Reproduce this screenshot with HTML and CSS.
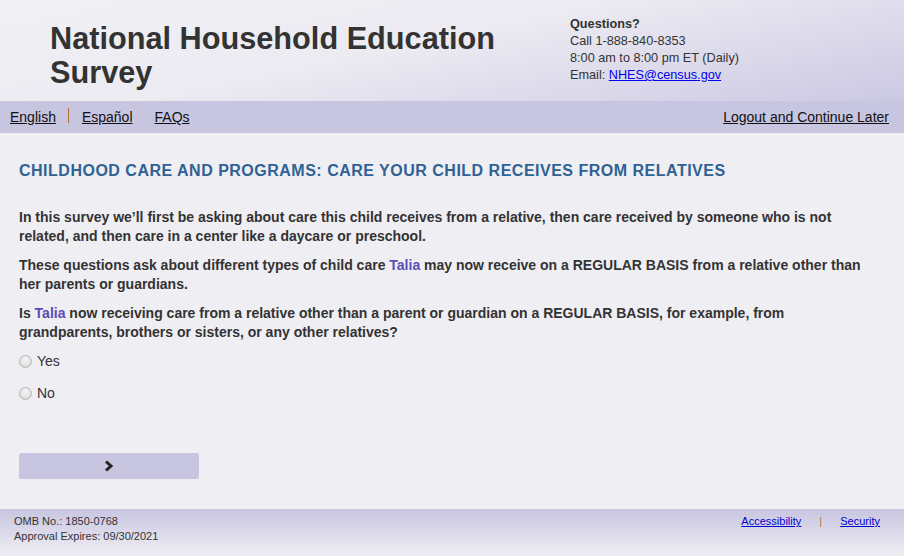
FILE: index.html
```html
<!DOCTYPE html>
<html lang="en">
<head>
    <meta charset="UTF-8">
    <meta name="viewport" content="width=device-width, initial-scale=1.0">
    <title>National Household Education Survey</title>
    <link rel="stylesheet" href="styles.css">
</head>
<body>
    <header class="site-header">
        <h1 class="site-title">National Household Education Survey</h1>
        <div class="contact">
            <div class="contact-title">Questions?</div>
            <div>Call 1-888-840-8353</div>
            <div>8:00 am to 8:00 pm ET (Daily)</div>
            <div>Email: <a href="#" class="contact-mail">NHES@census.gov</a></div>
        </div>
    </header>

    <nav class="nav-bar">
        <div class="nav-left">
            <a href="#" class="nav-link">English</a>
            <span class="nav-sep"></span>
            <a href="#" class="nav-link">Español</a>
            <a href="#" class="nav-link nav-faq">FAQs</a>
        </div>
        <a href="#" class="nav-link">Logout and Continue Later</a>
    </nav>

    <main class="survey">
        <h2 class="survey-heading">CHILDHOOD CARE AND PROGRAMS: CARE YOUR CHILD RECEIVES FROM RELATIVES</h2>
        <p class="survey-text">In this survey we’ll first be asking about care this child receives from a relative, then care received by someone who is not related, and then care in a center like a daycare or preschool.</p>
        <p class="survey-text">These questions ask about different types of child care <span class="child-name">Talia</span> may now receive on a REGULAR BASIS from a relative other than her parents or guardians.</p>
        <p class="survey-text">Is <span class="child-name">Talia</span> now receiving care from a relative other than a parent or guardian on a REGULAR BASIS, for example, from grandparents, brothers or sisters, or any other relatives?</p>

        <div class="answers">
            <label class="answer"><input type="radio" name="relcare"> Yes</label>
            <label class="answer"><input type="radio" name="relcare"> No</label>
        </div>

        <button class="next-btn" type="button">
            <svg width="12" height="12" viewBox="0 0 12 12"><path d="M3 1.5 L8 6 L3 10.5" fill="none" stroke="#222" stroke-width="3"/></svg>
        </button>
    </main>

    <footer class="site-footer">
        <div class="omb">
            <div>OMB No.: 1850-0768</div>
            <div>Approval Expires: 09/30/2021</div>
        </div>
        <div class="footer-links">
            <a href="#">Accessibility</a>
            <span class="footer-sep">|</span>
            <a href="#">Security</a>
        </div>
    </footer>
</body>
</html>
```

FILE: styles.css
```css
* {
    box-sizing: border-box;
    margin: 0;
    padding: 0;
}

body {
    font-family: "Liberation Sans", Arial, sans-serif;
    background: #efeef3;
    color: #333;
    width: 904px;
    height: 556px;
    display: flex;
    flex-direction: column;
}

/* Header */
.site-header {
    height: 101px;
    display: flex;
    padding: 0 0 0 50px;
    background: linear-gradient(168deg, #f0f0f4 0%, #ecebf2 45%, #cbc8e3 100%);
}

.site-title {
    width: 520px;
    padding-top: 22px;
    font-size: 30.7px;
    line-height: 34px;
    font-weight: bold;
    color: #333;
}

.contact {
    padding-top: 16px;
    font-size: 12.7px;
    line-height: 17px;
    color: #333;
}

.contact-title {
    font-weight: bold;
}

.contact-mail {
    color: #0000ee;
}

/* Nav */
.nav-bar {
    height: 32px;
    display: flex;
    align-items: center;
    justify-content: space-between;
    padding: 0 15px 0 10px;
    background: #c8c5e1;
}

.nav-left {
    display: flex;
    align-items: center;
}

.nav-link {
    font-size: 14px;
    color: #111;
}

.nav-sep {
    width: 1px;
    height: 15px;
    margin: 0 13px 0 12px;
    background: #a8723a;
    position: relative;
    top: -2px;
}

.nav-faq {
    margin-left: 22px;
}

/* Survey */
.survey {
    flex: 1;
    padding: 27px 35px 0 19px;
}

.survey-heading {
    font-size: 16px;
    line-height: 22px;
    color: #2f6294;
    letter-spacing: 0.5px;
    margin-bottom: 26px;
}

.survey-text {
    font-size: 14px;
    line-height: 19px;
    font-weight: bold;
    color: #333;
    margin-bottom: 10px;
}

.child-name {
    color: #5a4db3;
}

.answers {
    display: flex;
    flex-direction: column;
    gap: 13px;
    margin-top: 10px;
}

.answer {
    display: flex;
    align-items: center;
    gap: 5px;
    font-size: 14px;
    line-height: 19px;
}

.answer input {
    appearance: none;
    -webkit-appearance: none;
    width: 13px;
    height: 13px;
    margin: 0;
    border: 1px solid #b4b4b4;
    border-radius: 50%;
    background: radial-gradient(circle at 50% 35%, #f6f6f6 0%, #e2e2e2 60%, #d6d6d6 100%);
}

.next-btn {
    display: flex;
    align-items: center;
    justify-content: center;
    width: 180px;
    height: 26px;
    margin-top: 50px;
    border: none;
    border-radius: 2px;
    background: #c8c5e1;
}

/* Footer */
.site-footer {
    height: 47px;
    display: flex;
    justify-content: space-between;
    padding: 5px 24px 0 14px;
    background: linear-gradient(180deg, #c8c5e1 0%, #efeef3 100%);
    font-size: 11px;
    line-height: 15px;
}

.footer-links a {
    color: #0000cc;
}

.footer-sep {
    color: #b07a3c;
    margin: 0 15px 0 15px;
}
```
